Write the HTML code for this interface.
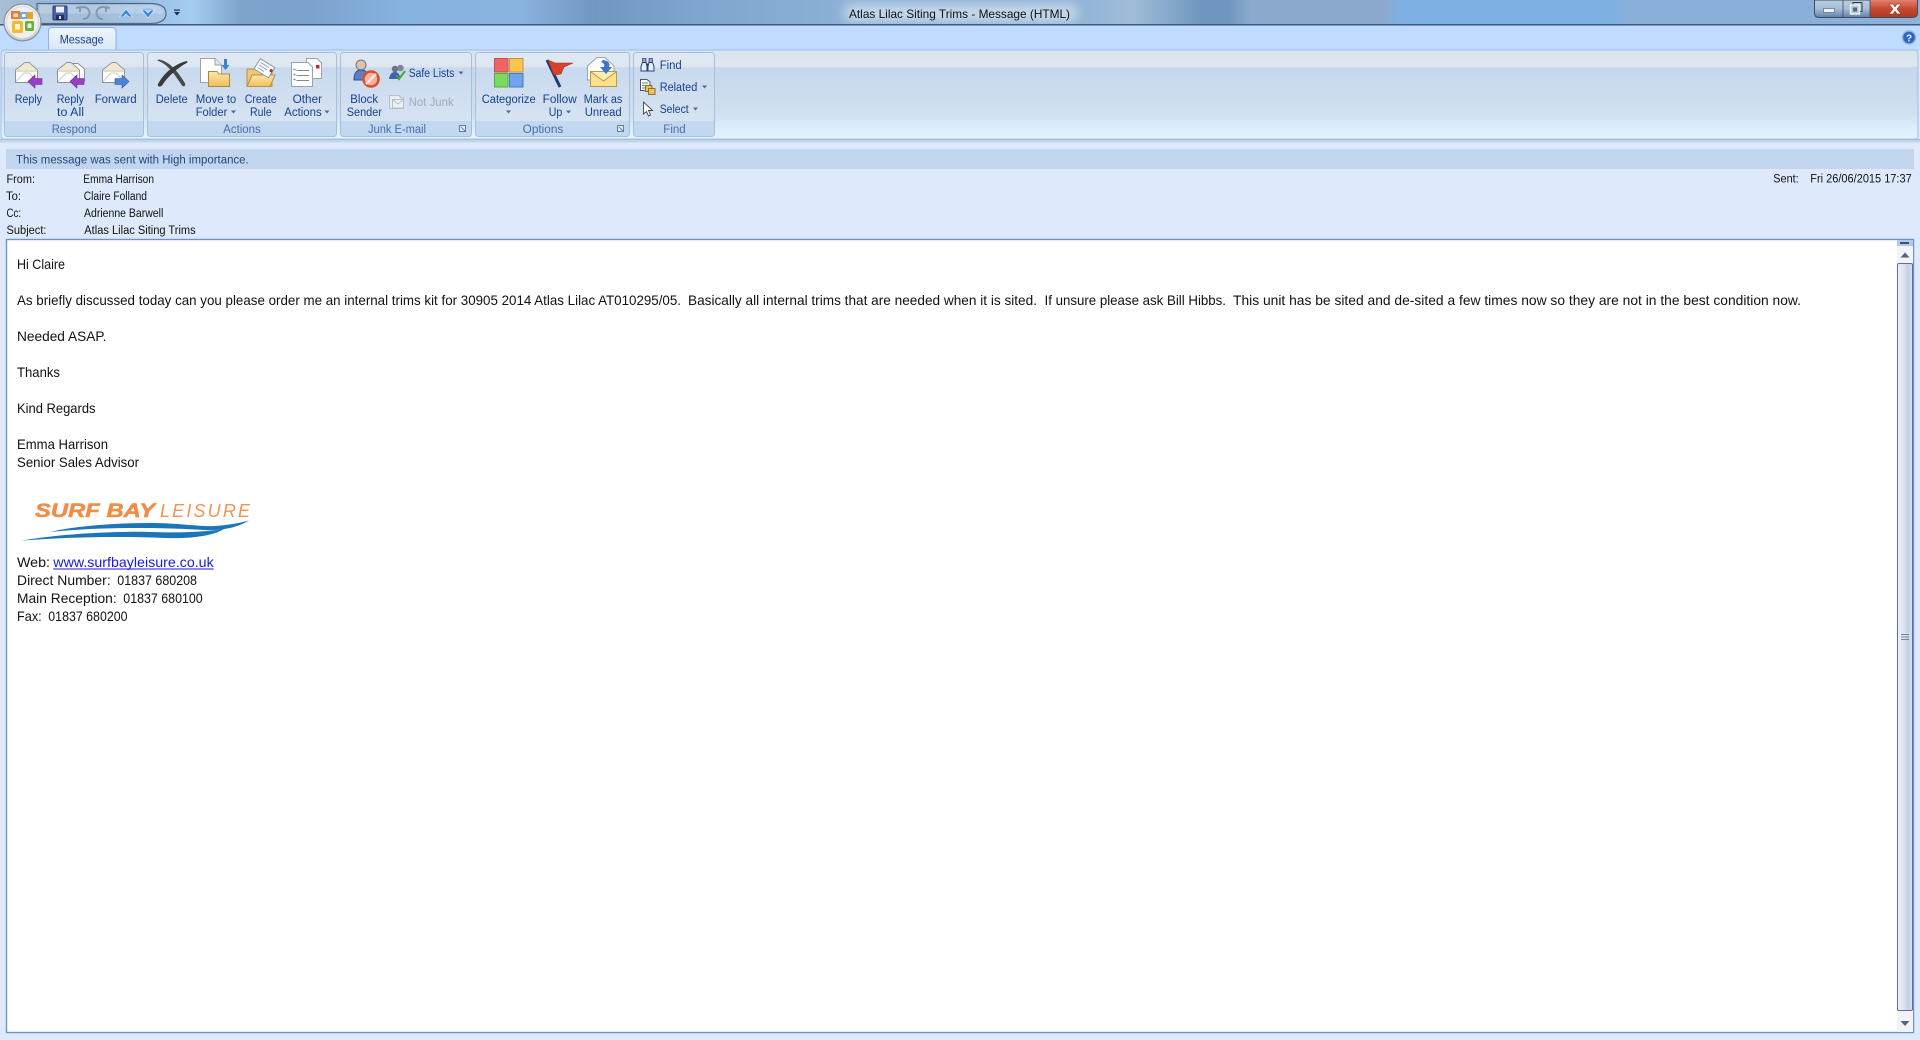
<!DOCTYPE html>
<html><head><meta charset="utf-8"><title>Atlas Lilac Siting Trims - Message (HTML)</title>
<style>
html,body{margin:0;padding:0;background:#deeafb;overflow:hidden}
svg{display:block}
text{font-family:"Liberation Sans",sans-serif;white-space:pre}
.r{font-size:11.5px;fill:#15428b}
.l{font-size:11.5px;fill:#4a6ea6}
.h{font-size:11.5px;fill:#111}
.b{font-size:14px;fill:#111}
</style></head><body>
<svg width="1920" height="1040" viewBox="0 0 1920 1040" xmlns="http://www.w3.org/2000/svg">
<defs>
<linearGradient id="tb" x1="0" x2="1920" y1="0" y2="0" gradientUnits="userSpaceOnUse">
<stop offset="0" stop-color="#a8bfd6"/><stop offset=".05" stop-color="#8db0d8"/><stop offset=".1" stop-color="#a5cdf0"/><stop offset=".125" stop-color="#7ea4cc"/><stop offset=".16" stop-color="#7ba2cc"/><stop offset=".21" stop-color="#86b2e0"/><stop offset=".27" stop-color="#8ab4e0"/><stop offset=".31" stop-color="#6f97c0"/><stop offset=".365" stop-color="#7fa6cf"/><stop offset=".43" stop-color="#8aafd5"/><stop offset=".56" stop-color="#8fb2d4"/><stop offset=".59" stop-color="#a0bdd8"/><stop offset=".625" stop-color="#6f96bf"/><stop offset=".64" stop-color="#6f96bf"/><stop offset=".651" stop-color="#8aa9cc"/><stop offset=".721" stop-color="#8aa9cc"/><stop offset=".729" stop-color="#7eb0e3"/><stop offset=".839" stop-color="#7eb0e3"/><stop offset=".849" stop-color="#8ab0da"/><stop offset=".9375" stop-color="#8ab0da"/><stop offset="1" stop-color="#8fb0d4"/>
</linearGradient>
<linearGradient id="rib" x1="0" x2="0" y1="50" y2="139" gradientUnits="userSpaceOnUse">
<stop offset="0" stop-color="#d9e2ed"/><stop offset=".18" stop-color="#dfe7f0"/><stop offset=".2" stop-color="#c6d7ec"/><stop offset=".72" stop-color="#d0e0f0"/><stop offset=".86" stop-color="#dbecf9"/><stop offset="1" stop-color="#e5f4fe"/>
</linearGradient>
<linearGradient id="grp" x1="0" x2="0" y1="52" y2="137" gradientUnits="userSpaceOnUse">
<stop offset="0" stop-color="#dfe8f3"/><stop offset=".17" stop-color="#dde6f1"/><stop offset=".19" stop-color="#c9d9ed"/><stop offset="1" stop-color="#d9e6f4"/>
</linearGradient>
<linearGradient id="tab" x1="0" x2="0" y1="27" y2="50" gradientUnits="userSpaceOnUse"><stop offset="0" stop-color="#eef6ff"/><stop offset="1" stop-color="#d9e7f9"/></linearGradient>
<linearGradient id="thumb" x1="0" x2="1" y1="0" y2="0"><stop offset="0" stop-color="#eef2f9"/><stop offset=".45" stop-color="#dbe3ef"/><stop offset=".7" stop-color="#c4d2e6"/><stop offset="1" stop-color="#d8e1ee"/></linearGradient>
<linearGradient id="red" x1="0" x2="0" y1="0" y2="1"><stop offset="0" stop-color="#e0816e"/><stop offset=".5" stop-color="#c94a32"/><stop offset="1" stop-color="#b03a24"/></linearGradient>
<linearGradient id="glass" x1="0" x2="0" y1="0" y2="1"><stop offset="0" stop-color="#b9cde2"/><stop offset=".5" stop-color="#a9bed6"/><stop offset="1" stop-color="#5f7fa8"/></linearGradient>
<linearGradient id="env" x1="0" x2="0" y1="0" y2="1"><stop offset="0" stop-color="#f8f6ec"/><stop offset="1" stop-color="#fff"/></linearGradient>
<linearGradient id="fold" x1="0" x2="0" y1="0" y2="1"><stop offset="0" stop-color="#fde7a6"/><stop offset="1" stop-color="#f2bd5c"/></linearGradient>
<radialGradient id="orb" cx=".5" cy=".35" r=".7"><stop offset="0" stop-color="#fff"/><stop offset=".7" stop-color="#e8eaee"/><stop offset="1" stop-color="#a9adb4"/></radialGradient>
<filter id="bl" x="-20%" y="-80%" width="140%" height="260%"><feGaussianBlur stdDeviation="6"/></filter>
<g id="envelope">
<path d="M0.5 8 L10 0.5 H14 L22.5 8 V20.5 H0.5Z" fill="#fff" stroke="#8e9298"/>
<path d="M1 8.5 L10 1 H14 L22 8.5 L22 10 L1 10Z" fill="#efe9d3"/>
<path d="M1 19.5 L9 11 H14 L22 19.5" fill="none" stroke="#c8ccd2"/>
<path d="M2 9 H21" stroke="#d6cfb6"/>
</g>
<path id="leftArrow" d="M0 6.5 L7 0 V3.5 H14 V9.5 H7 V13Z"/>
<path id="rightArrow" d="M14 6.5 L7 0 V3.5 H0 V9.5 H7 V13Z"/>
<path id="dd" d="M0 0 H5 L2.5 3Z" fill="#4d6a96"/>
</defs>

<!-- Title bar -->
<rect width="1920" height="24" fill="url(#tb)"/>
<rect x="845" y="5" width="232" height="16" fill="#e8f2f8" opacity=".7" filter="url(#bl)"/>
<rect y="24" width="1920" height="1.5" fill="#3f5a7e"/>
<text x="849" y="18" font-size="12" fill="#111" textLength="221" lengthAdjust="spacingAndGlyphs">Atlas Lilac Siting Trims - Message (HTML)</text>

<!-- Quick access -->
<path d="M37 3.5 H150 Q166 3.5 166 13.5 Q166 23.5 150 23.5 H37Z" fill="#b9cbdd" fill-opacity=".45" stroke="#566a84" stroke-width="1.2"/>
<path d="M40 5 H150 Q163 5 163 13.5 H40Z" fill="#fff" opacity=".2"/>
<rect x="53" y="6" width="14" height="14" rx="1" fill="#4b63a6" stroke="#263a72"/>
<rect x="56" y="6.5" width="8" height="6" fill="#e9eefb"/><rect x="56" y="15" width="8" height="5" fill="#1d2f66"/><rect x="59" y="16" width="2" height="3" fill="#ddd"/>
<path d="M79 9 A6 6 0 1 1 83 19 M76 8 L80 7 L80 12" fill="none" stroke="#8598ae" stroke-width="2"/>
<path d="M107 9 A6 6 0 1 0 103 19 M110 8 L106 7 L106 12" fill="none" stroke="#8598ae" stroke-width="2"/>
<path d="M119.5 17 L126 9 L132.5 17 L129 17 L126 14 L123 17Z" fill="#3b86d8" stroke="#dbe9f7" stroke-width=".7"/>
<path d="M119.5 17 H132.5 L126 19Z" fill="#8fc0ef"/>
<path d="M141.5 10 L148 18 L154.5 10 L151 10 L148 13 L145 10Z" fill="#3b86d8" stroke="#dbe9f7" stroke-width=".7"/>
<path d="M141.5 10 H154.5 L148 8Z" fill="#8fc0ef"/>
<rect x="174" y="9.5" width="6" height="1.2" fill="#1d2f55"/><path d="M174 12 H180 L177 15.5Z" fill="#1d2f55"/>

<!-- window controls -->
<path d="M1814.5 0 V13 Q1814.5 17.5 1819 17.5 H1912 Q1917.5 17.5 1917.5 13 V0Z" fill="url(#glass)" stroke="#3d4c60"/>
<path d="M1870 0 H1917 V13 Q1917 17 1912 17 H1870Z" fill="url(#red)"/>
<path d="M1843 0 V17 M1870 0 V17" stroke="#3d4c60" opacity=".8"/>
<rect x="1823.5" y="8.5" width="11" height="4" fill="#eef1f4" stroke="#5a6b80" stroke-width=".7"/>
<rect x="1853" y="2.5" width="9" height="9" fill="none" stroke="#2f3a4a" stroke-width="1"/>
<rect x="1850.5" y="5" width="9" height="9" fill="#b9c9db" stroke="#eef1f4" stroke-width="1.4"/><rect x="1853" y="7.5" width="4" height="4" fill="#55657a"/>
<path d="M1889 4 H1893 L1895 7 L1897 4 H1901 L1897 9 L1901 14 H1897 L1895 11 L1893 14 H1889 L1893 9Z" fill="#f2f2f2" stroke="#6c2a1e" stroke-width=".5"/>

<!-- Tab row -->
<rect y="25.5" width="1920" height="25" fill="#bfdbff"/>
<path d="M48.5 50 V31 Q48.5 27.5 52 27.5 H112 Q116 27.5 116 31 V50" fill="url(#tab)" stroke="#8db2e3"/>
<text class="r" x="59.7" y="43.5" textLength="44" lengthAdjust="spacingAndGlyphs">Message</text>
<circle cx="1909" cy="37.5" r="6.5" fill="#2b65c2" stroke="#8fb2e0" stroke-width="1.5"/>
<text x="1909" y="41.5" font-size="10" font-weight="bold" fill="#fff" text-anchor="middle">?</text>

<!-- Ribbon -->
<rect x="1" y="50" width="1917" height="89" rx="3" fill="url(#rib)" stroke="#8db2e3" stroke-width=".8"/>
<rect y="139" width="1920" height="1" fill="#9dc2df"/>
<rect y="140" width="1920" height="2.5" fill="#c5d5e8"/>

<!-- Groups -->
<g stroke="#a8bfd9" stroke-width="1" fill="url(#grp)">
<rect x="4.5" y="52.5" width="139" height="84" rx="3"/>
<rect x="147.5" y="52.5" width="189" height="84" rx="3"/>
<rect x="340.5" y="52.5" width="131" height="84" rx="3"/>
<rect x="475.5" y="52.5" width="154" height="84" rx="3"/>
<rect x="633.5" y="52.5" width="81" height="84" rx="3"/>
</g>
<g fill="#c1d8f0">
<path d="M5 121 H143 V133 Q143 136 140 136 H8 Q5 136 5 133Z"/>
<path d="M148 121 H336 V133 Q336 136 333 136 H151 Q148 136 148 133Z"/>
<path d="M341 121 H471 V133 Q471 136 468 136 H344 Q341 136 341 133Z"/>
<path d="M476 121 H629 V133 Q629 136 626 136 H479 Q476 136 476 133Z"/>
<path d="M634 121 H714 V133 Q714 136 711 136 H637 Q634 136 634 133Z"/>
</g>

<text class="l" x="51.7" y="133" textLength="45" lengthAdjust="spacingAndGlyphs">Respond</text>
<text class="l" x="223.3" y="133" textLength="37.4" lengthAdjust="spacingAndGlyphs">Actions</text>
<text class="l" x="368" y="133" textLength="58" lengthAdjust="spacingAndGlyphs">Junk E-mail</text>
<text class="l" x="522.7" y="133" textLength="40.6" lengthAdjust="spacingAndGlyphs">Options</text>
<text class="l" x="663.3" y="133" textLength="22.4" lengthAdjust="spacingAndGlyphs">Find</text>

<!-- launchers -->
<g fill="none" stroke="#5d7ea8"><rect x="459.5" y="125.5" width="6" height="6" fill="#e9f0f8"/><path d="M461 127 L465 131"/></g>
<g fill="none" stroke="#5d7ea8"><rect x="617.5" y="125.5" width="6" height="6" fill="#e9f0f8"/><path d="M619 127 L623 131"/></g>

<!-- Ribbon labels -->
<text class="r" x="14.7" y="103" textLength="27.3" lengthAdjust="spacingAndGlyphs">Reply</text>
<text class="r" x="56.7" y="103" textLength="27.3" lengthAdjust="spacingAndGlyphs">Reply</text>
<text class="r" x="57" y="116" textLength="27" lengthAdjust="spacingAndGlyphs">to All</text>
<text class="r" x="94.7" y="103" textLength="42" lengthAdjust="spacingAndGlyphs">Forward</text>
<text class="r" x="155.7" y="103" textLength="32" lengthAdjust="spacingAndGlyphs">Delete</text>
<text class="r" x="195.7" y="103" textLength="40.6" lengthAdjust="spacingAndGlyphs">Move to</text>
<text class="r" x="195.7" y="116" textLength="31.6" lengthAdjust="spacingAndGlyphs">Folder</text>
<use href="#dd" x="231" y="110.5"/>
<text class="r" x="244.7" y="103" textLength="32" lengthAdjust="spacingAndGlyphs">Create</text>
<text class="r" x="250" y="116" textLength="21.7" lengthAdjust="spacingAndGlyphs">Rule</text>
<text class="r" x="292.7" y="103" textLength="29.3" lengthAdjust="spacingAndGlyphs">Other</text>
<text class="r" x="284.3" y="116" textLength="37.4" lengthAdjust="spacingAndGlyphs">Actions</text>
<use href="#dd" x="324.5" y="110.5"/>
<text class="r" x="350.3" y="103" textLength="27.7" lengthAdjust="spacingAndGlyphs">Block</text>
<text class="r" x="346.7" y="116" textLength="35.3" lengthAdjust="spacingAndGlyphs">Sender</text>
<text class="r" x="408.7" y="77" textLength="45.6" lengthAdjust="spacingAndGlyphs">Safe Lists</text>
<use href="#dd" x="458.5" y="71.5"/>
<text x="408.7" y="106" font-size="11.5" fill="#a3abb6" textLength="45" lengthAdjust="spacingAndGlyphs">Not Junk</text>
<text class="r" x="481.7" y="103" textLength="54" lengthAdjust="spacingAndGlyphs">Categorize</text>
<use href="#dd" x="506" y="110.5"/>
<text class="r" x="542.7" y="103" textLength="34" lengthAdjust="spacingAndGlyphs">Follow</text>
<text class="r" x="548.7" y="116" textLength="13.6" lengthAdjust="spacingAndGlyphs">Up</text>
<use href="#dd" x="566" y="110.5"/>
<text class="r" x="583.7" y="103" textLength="38.6" lengthAdjust="spacingAndGlyphs">Mark as</text>
<text class="r" x="584.7" y="116" textLength="37" lengthAdjust="spacingAndGlyphs">Unread</text>
<text class="r" x="659.7" y="69" textLength="22" lengthAdjust="spacingAndGlyphs">Find</text>
<text class="r" x="659.7" y="91" textLength="37.6" lengthAdjust="spacingAndGlyphs">Related</text>
<use href="#dd" x="702" y="85.5"/>
<text class="r" x="659.7" y="113" textLength="29" lengthAdjust="spacingAndGlyphs">Select</text>
<use href="#dd" x="693" y="107.5"/>

<!-- Reply icon -->
<use href="#envelope" x="15" y="62"/>
<use href="#leftArrow" x="28" y="75" fill="#9a3fc4" stroke="#6c2a92" stroke-width=".6"/>
<!-- Reply all -->
<path d="M66 63.5 H78 L84.5 69 V81 H70" fill="#fff" stroke="#8e9298"/>
<use href="#envelope" x="57" y="62"/>
<use href="#leftArrow" x="70" y="75" fill="#9a3fc4" stroke="#6c2a92" stroke-width=".6"/>
<!-- Forward -->
<use href="#envelope" x="102" y="62"/>
<use href="#rightArrow" x="115" y="75" fill="#4a82dc" stroke="#2d5aa8" stroke-width=".6"/>

<!-- Delete X -->
<path d="M157 60.5 C167 63 175 75 182 85.5 C184 87.5 186.5 85.5 184.5 82.5 C178 72 170 61.5 159 59.5Z" fill="#4a4a4a"/>
<path d="M187 61 C175 63.5 164 73 158 84 C157 86.5 160 87.5 162 85.5 C168 76 178 67.5 187.5 62.5Z" fill="#3a3a3a"/>

<!-- Move to folder -->
<path d="M200.5 58.5 H215 L221.5 65 V82.5 H200.5Z" fill="#fff" stroke="#9aa2ac"/>
<path d="M215 58.5 V65 H221.5" fill="#dfe6ee" stroke="#9aa2ac"/>
<path d="M208.5 71.5 H217 L219 74 H229.5 V86.5 H208.5Z" fill="url(#fold)" stroke="#a98a45"/>
<path d="M224 59 H227 V65 L229.5 65 L225.5 70 L221.5 65 L224 65Z" fill="#3a7fd0"/>

<!-- Create rule -->
<path d="M247 86.5 V69 H259 L262 72 H272 V86.5Z" fill="#f0c776" stroke="#b1924f"/>
<path d="M247 86.5 L252 75 H275 L270 86.5Z" fill="url(#fold)" stroke="#b1924f"/>
<g transform="rotate(32 264 68)"><rect x="256" y="62" width="17" height="12" fill="#fff" stroke="#8e97a3"/><path d="M258 65 H268 M258 68 H268 M258 71 H266" stroke="#8fa2bd"/><rect x="270" y="65" width="3" height="3" fill="#c4243a"/></g>

<!-- Other actions -->
<path d="M306.5 58.5 H317 L321.5 63 V78.5 H306.5Z" fill="#fff" stroke="#9aa2ac"/>
<rect x="316" y="65" width="3.5" height="3.5" fill="#c4243a"/>
<path d="M291.5 62.5 H308 L312.5 67 V86.5 H291.5Z" fill="#fff" stroke="#9aa2ac"/>
<path d="M296.5 70.5 H309 M296.5 75.5 H309 M296.5 80.5 H309" stroke="#7f8894"/>
<path d="M293.5 69.5 h2 M293.5 74.5 h2 M293.5 79.5 h2" stroke="#7f8894" stroke-width="1.5"/>

<!-- Block sender -->
<circle cx="361" cy="65" r="5" fill="#d9c3ab" stroke="#777"/>
<path d="M354 80 Q354 70 361 70 Q369 70 369 80Z" fill="#5d7fc8" stroke="#34508c"/>
<circle cx="371" cy="79" r="7.5" fill="#f2b49a" stroke="#d9502a" stroke-width="2.6"/>
<path d="M366 84 L376 74" stroke="#f7e8e0" stroke-width="2.4"/>

<!-- Safe lists -->
<circle cx="395" cy="69" r="3.2" fill="#6a7480"/><circle cx="400.5" cy="68" r="3.2" fill="#7c8590"/>
<path d="M389 79 Q390 72 395 72 Q400 72 400 79Z" fill="#3e5fb5"/>
<path d="M396 75 L399 79 L405 71" fill="none" stroke="#4aa23c" stroke-width="2"/>

<!-- Not junk -->
<path d="M389.5 95.5 H399 L401 98 H403.5 V108.5 H389.5Z" fill="#e9edf2" stroke="#b9bfc7"/>
<rect x="392.5" y="99.5" width="11" height="8.5" fill="#eef1f4" stroke="#b9bfc7"/><path d="M393 100 L398 104 L403 100" fill="none" stroke="#b9bfc7"/>

<!-- Categorize -->
<rect x="494.5" y="58.5" width="13.5" height="13.5" fill="#f26565" stroke="#b55"/>
<rect x="509.5" y="58.5" width="13.5" height="13.5" fill="#fdc353" stroke="#c09442"/>
<rect x="494.5" y="73.5" width="13.5" height="13.5" fill="#79da60" stroke="#5aa848"/>
<rect x="509.5" y="73.5" width="13.5" height="13.5" fill="#6fa3ef" stroke="#4a78bc"/>

<!-- Follow up -->
<path d="M547 60 L560 87" stroke="#243c72" stroke-width="3"/>
<path d="M548 60 L555 63 L573 63 L564 67 L561 74 L554 75Z" fill="#d8412c" stroke="#a52c1c" stroke-width=".6"/>

<!-- Mark unread -->
<path d="M587.5 66 L597 57.5 H605 L614 66 V80 H587.5Z" fill="#fdfdfd" stroke="#a0a6ae"/>
<rect x="590.5" y="71.5" width="26" height="15" fill="#fce08a" stroke="#b69a4a"/>
<path d="M591 72 L603.5 81 L616 72" fill="#fdeeb4" stroke="#b69a4a"/>
<path d="M603 60 Q611 61 609 67 L612 67 L606 74 L600 67 L604 67 Q605 63 601 62Z" fill="#3c74c8"/>

<!-- Find binoculars -->
<path d="M642.5 58.5 h3.5 v4 h-3.5Z M649 58.5 h3.5 v4 h-3.5Z" fill="#8fa3cc" stroke="#28407a" stroke-width=".7"/>
<path d="M642.5 62.5 h3.5 l1 4 v4.5 h-6 v-4.5Z M649 62.5 h3.5 l1.5 4 v4.5 h-6 v-4.5Z" fill="#eaf0fa" stroke="#28407a" stroke-width="1"/>
<rect x="646.5" y="63.5" width="2" height="3" fill="#28407a"/>
<!-- Related -->
<path d="M640.5 79.5 H647 L650 82 V90.5 H640.5Z" fill="#fff" stroke="#4d5560"/>
<path d="M642 83 H648 M642 85.5 H648 M642 88 H648" stroke="#6d7580"/>
<rect x="645.5" y="85.5" width="6.5" height="6" fill="#e8bf62" stroke="#8a6f30"/>
<rect x="648.5" y="88.5" width="6.5" height="6" fill="#f1c45a" stroke="#8a6f30"/>
<!-- Select cursor -->
<path d="M643.5 102 V114 L646.5 111.5 L648.5 116 L650.5 115 L648.5 110.5 L652.5 110.5Z" fill="#fff" stroke="#444" stroke-width=".9"/>

<!-- Office orb -->
<circle cx="22.5" cy="22.5" r="18.5" fill="url(#orb)" stroke="#8c929b" stroke-width="1.2"/>
<circle cx="22.5" cy="22.5" r="16" fill="#eef0f3" stroke="#cfd3d9" stroke-width=".8"/>
<rect x="11" y="11" width="9" height="8" fill="#ef7a2e"/>
<rect x="13.5" y="13.5" width="4.5" height="3.5" fill="#f6e2c6"/>
<rect x="20" y="12" width="7" height="7" fill="#7aa8d8"/>
<rect x="22" y="14" width="3.5" height="3" fill="#f4f6fa"/>
<rect x="27" y="12" width="6" height="7" fill="#e2a42a"/>
<rect x="25" y="21" width="9" height="10" rx="1.5" fill="#6ab03e"/>
<rect x="27.5" y="23.5" width="4" height="4.5" fill="#e8f2d8"/>
<rect x="12" y="21" width="11" height="12" rx="1.5" fill="#f5bb2c"/>
<rect x="15" y="24" width="5" height="5.5" fill="#fdf4d2"/>

<!-- Info bar -->
<rect x="6" y="149" width="1908" height="20" fill="#c1d6ee"/>
<text x="16" y="163.3" font-size="11.5" fill="#24467f" textLength="232.7" lengthAdjust="spacingAndGlyphs">This message was sent with High importance.</text>

<!-- Header fields -->
<text class="h" x="6.5" y="183" textLength="28.5" lengthAdjust="spacingAndGlyphs">From:</text>
<text class="h" x="6" y="200" textLength="15" lengthAdjust="spacingAndGlyphs">To:</text>
<text class="h" x="6.5" y="217" textLength="14.5" lengthAdjust="spacingAndGlyphs">Cc:</text>
<text class="h" x="6.5" y="234" textLength="40" lengthAdjust="spacingAndGlyphs">Subject:</text>
<text class="h" x="83.3" y="183" textLength="70.7" lengthAdjust="spacingAndGlyphs">Emma Harrison</text>
<text class="h" x="83.7" y="200" textLength="63.3" lengthAdjust="spacingAndGlyphs">Claire Folland</text>
<text class="h" x="84" y="217" textLength="79.3" lengthAdjust="spacingAndGlyphs">Adrienne Barwell</text>
<text class="h" x="84.3" y="234" textLength="111.4" lengthAdjust="spacingAndGlyphs">Atlas Lilac Siting Trims</text>
<text class="h" x="1773.3" y="182.7" textLength="25.4" lengthAdjust="spacingAndGlyphs">Sent:</text>
<text class="h" x="1810.3" y="182.7" textLength="101.4" lengthAdjust="spacingAndGlyphs">Fri 26/06/2015 17:37</text>

<!-- Message frame -->
<rect x="6.5" y="239.5" width="1907" height="793" fill="#fff" stroke="#6d93c3" stroke-width="1.4"/>

<!-- Body text -->
<text class="b" x="17" y="269" textLength="48" lengthAdjust="spacingAndGlyphs">Hi Claire</text>
<text class="b" x="17" y="305" textLength="664" lengthAdjust="spacingAndGlyphs">As briefly discussed today can you please order me an internal trims kit for 30905 2014 Atlas Lilac AT010295/05.</text>
<text class="b" x="688" y="305" textLength="349" lengthAdjust="spacingAndGlyphs">Basically all internal trims that are needed when it is sited.</text>
<text class="b" x="1044.5" y="305" textLength="181.5" lengthAdjust="spacingAndGlyphs">If unsure please ask Bill Hibbs.</text>
<text class="b" x="1233" y="305" textLength="568" lengthAdjust="spacingAndGlyphs">This unit has be sited and de-sited a few times now so they are not in the best condition now.</text>
<text class="b" x="17" y="341" textLength="89.5" lengthAdjust="spacingAndGlyphs">Needed ASAP.</text>
<text class="b" x="17" y="377" textLength="43" lengthAdjust="spacingAndGlyphs">Thanks</text>
<text class="b" x="17" y="413" textLength="78.5" lengthAdjust="spacingAndGlyphs">Kind Regards</text>
<text class="b" x="17" y="449" textLength="91" lengthAdjust="spacingAndGlyphs">Emma Harrison</text>
<text class="b" x="17" y="467" textLength="122" lengthAdjust="spacingAndGlyphs">Senior Sales Advisor</text>

<!-- Logo -->
<text x="35" y="517" font-size="19.5" font-weight="bold" font-style="italic" fill="#ee8d47" stroke="#ee8d47" stroke-width=".5" textLength="120" lengthAdjust="spacingAndGlyphs">SURF BAY</text>
<text x="160" y="517" font-size="18" font-style="italic" fill="#ee9557" textLength="90" lengthAdjust="spacing">LEISURE</text>
<path d="M50 532 C70 527 110 523 150 523 C180 523 200 527 215 526 C228 525 240 523 249 520.5 C240 526 225 531 205 530 C170 528 110 526 50 532Z" fill="#1b75b6"/>
<path d="M22 540.5 C60 534 110 531 150 532 C180 533 205 532 224 529 C214 535 195 539 165 538 C120 536 70 537 22 540.5Z" fill="#1b75b6"/>

<text class="b" x="17" y="567" textLength="33" lengthAdjust="spacingAndGlyphs">Web:</text>
<text class="b" x="53.3" y="567" style="fill:#1a1ad0" textLength="160.4" lengthAdjust="spacingAndGlyphs">www.surfbayleisure.co.uk</text>
<rect x="53.3" y="568.5" width="160.4" height="1" fill="#1a1ad0"/>
<text class="b" x="17" y="585" textLength="93.7" lengthAdjust="spacingAndGlyphs">Direct Number:</text>
<text class="b" x="117.3" y="585" textLength="79.7" lengthAdjust="spacingAndGlyphs">01837 680208</text>
<text class="b" x="17" y="603" textLength="99.7" lengthAdjust="spacingAndGlyphs">Main Reception:</text>
<text class="b" x="123.3" y="603" textLength="79.4" lengthAdjust="spacingAndGlyphs">01837 680100</text>
<text class="b" x="17" y="621" textLength="24.7" lengthAdjust="spacingAndGlyphs">Fax:</text>
<text class="b" x="48.3" y="621" textLength="79.2" lengthAdjust="spacingAndGlyphs">01837 680200</text>

<!-- Scrollbar -->
<rect x="1897" y="240" width="16" height="792" fill="#f2f3f6"/>
<rect x="1897" y="240" width="16" height="6" fill="#b3c9ec"/>
<rect x="1900" y="242" width="9" height="2" fill="#3f5070"/>
<path d="M1900.5 257.5 L1905 252.5 L1909.5 257.5Z" fill="#56637a"/>
<rect x="1897.5" y="263.5" width="15" height="747" rx="1.5" fill="url(#thumb)" stroke="#5d6f98"/>
<path d="M1901 634.5 H1909 M1901 637 H1909 M1901 639.5 H1909" stroke="#7a8698"/>
<path d="M1900.5 1021 H1909.5 L1905 1026Z" fill="#56637a"/>
</svg>
</body></html>
